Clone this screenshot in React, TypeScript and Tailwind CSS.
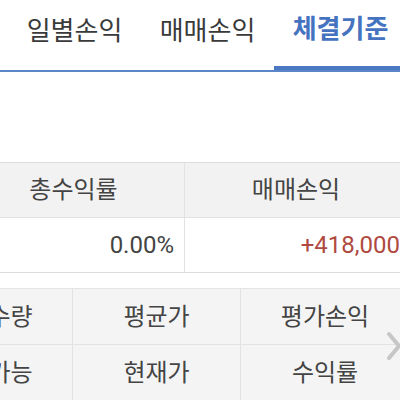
const FONT = "font-['Roboto','Noto_Sans_CJK_KR',sans-serif]";

const TABS = [
  { label: '일별손익', active: false },
  { label: '매매손익', active: false },
  { label: '체결기준', active: true },
];

const DETAIL_ROWS = [
  ['보유수량', '평균가', '평가손익'],
  ['매도가능', '현재가', '수익률'],
];

export default function App() {
  return (
    <div className={`relative h-[400px] w-[400px] overflow-hidden bg-white ${FONT}`}>
      <div className="flex h-[72px] border-b-2 border-[#5a86c8] pl-2">
        {TABS.map((tab) => (
          <div
            key={tab.label}
            className={`flex h-[70px] w-[133px] shrink-0 items-center justify-center pb-[7px] text-[26px] ${
              tab.active
                ? 'border-b-4 border-[#4a78c2] pb-[3px] font-bold text-[#4573c0]'
                : 'text-[#3a3a3a]'
            }`}
          >
            {tab.label}
          </div>
        ))}
      </div>

      <div className="mt-[90px] -ml-[37px] w-[444px] border-y border-[#dcdcdc]">
        <div className="flex h-[55px] border-b border-[#e2e2e2] bg-[#f2f2f2] text-[24px] text-[#444]">
          <div className="flex w-[222px] items-center justify-center border-r border-[#e2e2e2]">총수익률</div>
          <div className="flex w-[222px] items-center justify-center">매매손익</div>
        </div>
        <div className="flex h-[54px] text-[24px]">
          <div className="flex w-[222px] items-center justify-end border-r border-[#e2e2e2] pr-[10px] text-[#444]">
            0.00%
          </div>
          <div className="flex w-[222px] items-center justify-end pr-[7px] text-[#b04a40]">+418,000</div>
        </div>
      </div>

      <div className="mt-[15px] -ml-[95px] w-[504px] border-t border-[#e4e4e4] bg-[#f4f4f4]">
        {DETAIL_ROWS.map((row, i) => (
          <div key={i} className="flex h-[56px] border-b border-[#e2e2e2] text-[24px] text-[#444]">
            {row.map((cell, j) => (
              <div
                key={cell}
                className={`flex w-[168px] items-center justify-center ${j < 2 ? 'border-r border-[#e2e2e2]' : ''}`}
              >
                {cell}
              </div>
            ))}
          </div>
        ))}
      </div>

      <svg className="absolute left-[386px] top-[331px]" width="16" height="30" viewBox="0 0 16 30" fill="none">
        <path d="M3 3 L13 15 L3 27" stroke="#c6c6c6" strokeWidth="4" strokeLinecap="round" strokeLinejoin="round" />
      </svg>
    </div>
  );
}
